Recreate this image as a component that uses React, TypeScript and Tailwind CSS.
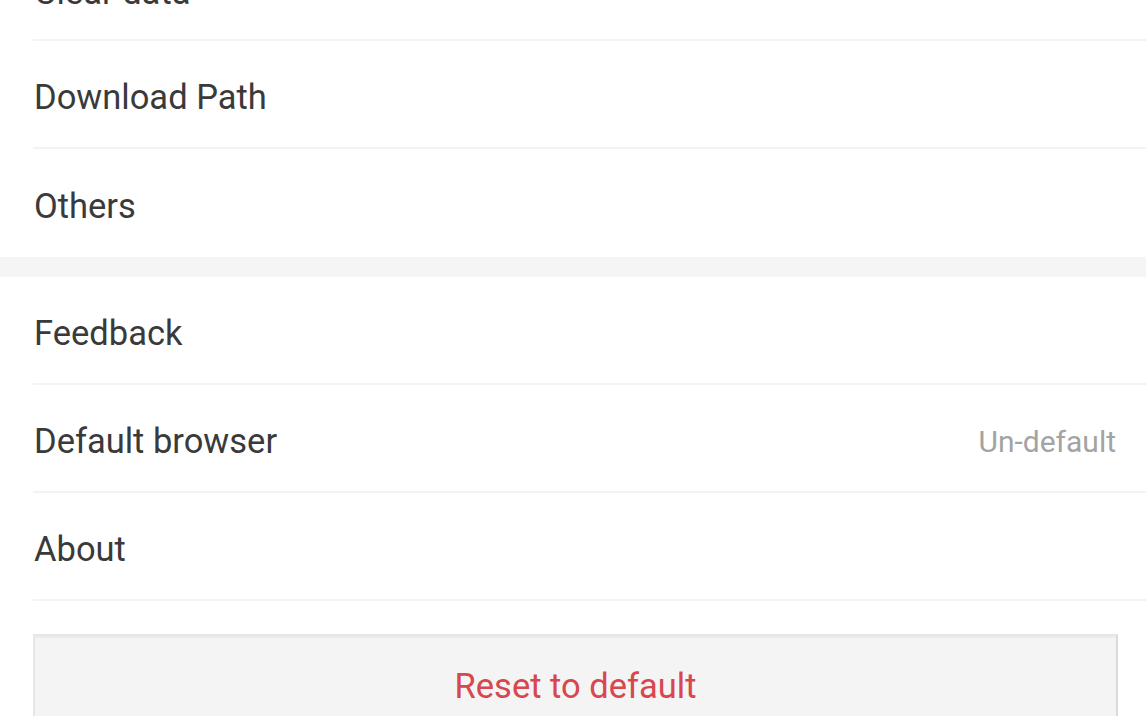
import React from 'react';

type Item = {
  label: string;
  value?: string;
};

const groupOne: Item[] = [{ label: 'Download Path' }, { label: 'Others' }];

const groupTwo: Item[] = [
  { label: 'Feedback' },
  { label: 'Default browser', value: 'Un-default' },
  { label: 'About' },
];

const Row = ({ item, divider }: { item: Item; divider: boolean }) => (
  <div>
    <div className="flex h-[106px] items-center justify-between pl-[34px] pr-[30px] pt-[7px]">
      <span className="text-[34.5px] text-[#3a3a3a]">{item.label}</span>
      {item.value && <span className="text-[30px] text-[#a3a3a3]">{item.value}</span>}
    </div>
    {divider && <div className="ml-[33px] h-[2px] bg-[#f3f3f3]" />}
  </div>
);

const App = () => {
  return (
    <div className="h-[716px] w-full overflow-hidden bg-white font-['Roboto',sans-serif]">
      <div className="-mt-[60px]">
        <div className="flex h-[99px] items-center pl-[34px] pt-[7px]">
          <span className="text-[34.5px] text-[#3a3a3a]">Clear data</span>
        </div>
        <div className="ml-[33px] h-[2px] bg-[#f3f3f3]" />
      </div>

      <Row item={groupOne[0]} divider />
      <div className="flex h-[108px] items-center pl-[34px] pt-[7px]">
        <span className="text-[34.5px] text-[#3a3a3a]">{groupOne[1].label}</span>
      </div>

      <div className="h-[20px] bg-[#f5f5f5]" />

      {groupTwo.map((item) => (
        <Row key={item.label} item={item} divider />
      ))}

      <div className="pl-[33px] pr-[28px] pt-[33px]">
        <button className="flex h-[106px] w-full items-center justify-center border-2 border-[#e6e6e6] border-r-[#dadada] bg-[#f4f4f4] shadow-[inset_0_2px_0_#ececec]">
          <span className="text-[34.5px] text-[#d8474d]">Reset to default</span>
        </button>
      </div>
    </div>
  );
};

export default App;
